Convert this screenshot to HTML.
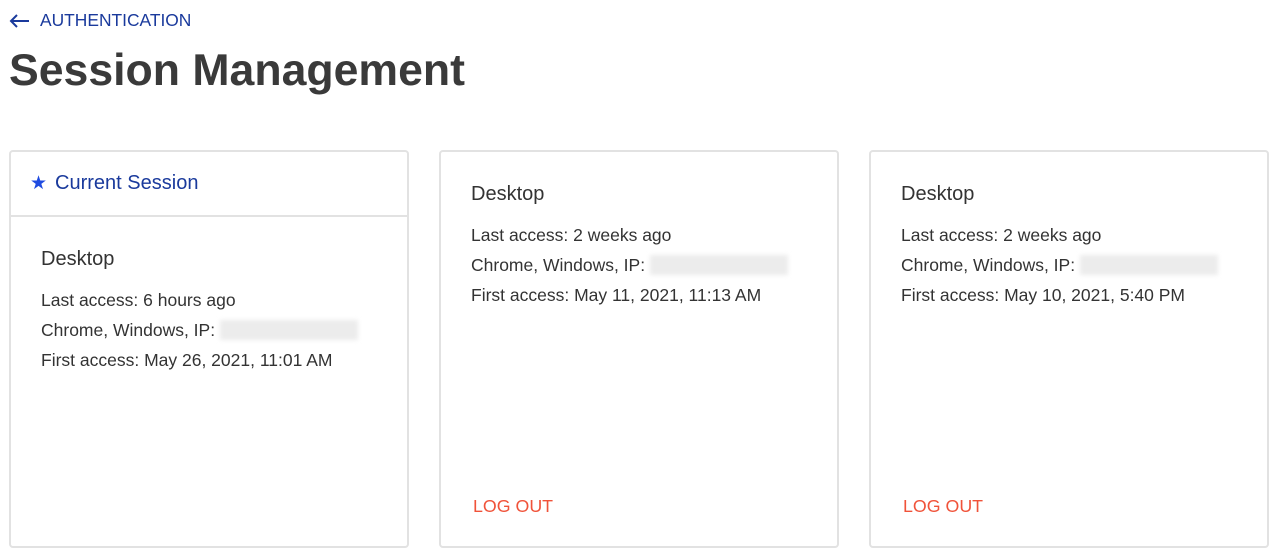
<!DOCTYPE html>
<html><head><style>
body{margin:0;background:#fff;font-family:"Liberation Sans",Arial,sans-serif;color:#333;}
.back{position:absolute;left:9px;top:10px;font-size:17.4px;color:#1a3a9c;display:flex;align-items:center;gap:9px}
h1{position:absolute;left:9px;top:46px;margin:0;font-size:44.6px;font-weight:bold;color:#3a3a3a}
.card{position:absolute;top:150px;width:396px;height:394px;border:2px solid #e2e2e2;border-radius:4px;background:#fff}
.hdr{height:63px;border-bottom:2px solid #e2e2e2;display:flex;align-items:center;padding-left:19px;font-size:20px;color:#1a3a9c}
.body{padding:31px 0 0 30px;font-size:17.5px;line-height:30px;color:#333}
.body .t{font-size:20px;margin-bottom:15px;line-height:22px}
.ip{display:inline-block;width:138px;height:20px;vertical-align:-4px;background:#ececec;filter:blur(2px)}
.lo{position:absolute;left:32px;top:344px;font-size:17.8px;color:#f0533a}
</style></head><body>
<div class="back"><svg width="22" height="14" viewBox="0 0 22 14"><path d="M20 7H2M8 1L2 7l6 6" stroke="#1a3a9c" stroke-width="2" fill="none"/></svg>AUTHENTICATION</div>
<h1>Session Management</h1>
<div class="card" style="left:9px">
<div class="hdr"><span style="color:#1f4be0;font-size:19px;margin-right:8px">★</span>Current Session</div>
<div class="body" style="padding-top:31px"><div class="t">Desktop</div>Last access: 6 hours ago<br>Chrome, Windows, IP: <span class="ip"></span><br>First access: May 26, 2021, 11:01 AM</div>
</div>
<div class="card" style="left:439px">
<div class="body"><div class="t">Desktop</div>Last access: 2 weeks ago<br>Chrome, Windows, IP: <span class="ip"></span><br>First access: May 11, 2021, 11:13 AM</div>
<div class="lo">LOG OUT</div>
</div>
<div class="card" style="left:869px">
<div class="body"><div class="t">Desktop</div>Last access: 2 weeks ago<br>Chrome, Windows, IP: <span class="ip"></span><br>First access: May 10, 2021, 5:40 PM</div>
<div class="lo">LOG OUT</div>
</div>
</body></html>
